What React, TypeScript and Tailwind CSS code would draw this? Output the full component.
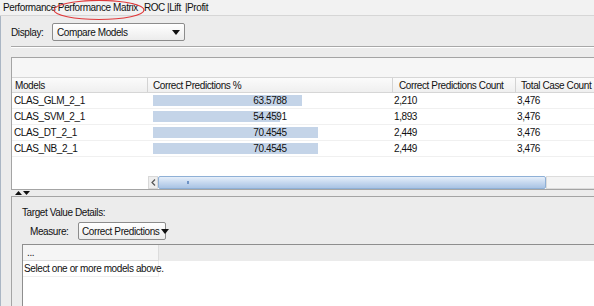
const rows = [
  { name: 'CLAS_GLM_2_1', pct: 63.5788, count: '2,210', total: '3,476' },
  { name: 'CLAS_SVM_2_1', pct: 54.4591, count: '1,893', total: '3,476' },
  { name: 'CLAS_DT_2_1', pct: 70.4545, count: '2,449', total: '3,476' },
  { name: 'CLAS_NB_2_1', pct: 70.4545, count: '2,449', total: '3,476' },
]

function Caret() {
  return (
    <svg width="8" height="5" viewBox="0 0 8 5" className="shrink-0">
      <path d="M0 0h8L4 5z" fill="#111" />
    </svg>
  )
}

export default function App() {
  return (
    <div className="relative w-[594px] h-[306px] overflow-hidden whitespace-nowrap bg-[#ececec] text-[10px] tracking-[-0.4px] text-[#111] font-['Liberation_Sans',Arial,sans-serif] flex flex-col">
      {/* tabs */}
      <div className="h-[16px] shrink-0 flex items-center pl-[3px] bg-[#f2f2f2] border-b border-[#d6d6d6]">
        <span className="mr-[2px]">Performance</span>
        <span className="mr-[6px]">Performance Matrix</span>
        <span className="mr-[2px]">ROC</span>
        <span className="mr-[4px]">|Lift</span>
        <span>|Profit</span>
      </div>
      <svg className="absolute left-[52px] top-0" width="94" height="22" viewBox="0 0 94 22">
        <ellipse cx="47" cy="10" rx="45" ry="9.5" fill="none" stroke="#e0393b" strokeWidth="1.2" />
      </svg>

      <div className="flex-1 flex bg-[#ececec]">
        <div className="w-[3px] bg-[#dde6ef] border-r border-[#aab6c4]" />
        <div className="flex-1 flex flex-col pl-[10px]">
          {/* display row */}
          <div className="flex items-center mt-[7px] h-[18px]">
            <span className="w-[41px]">Display:</span>
            <div className="w-[133px] h-[18px] flex items-center justify-between px-[4px] border border-[#8c8c8c] rounded-[2px] bg-gradient-to-b from-white to-[#ececec]">
              <span>Compare Models</span>
              <Caret />
            </div>
          </div>
          <div className="mt-[5px] h-[2px] border-t border-[#a8a8a8] border-b border-b-white" />

          {/* table panel */}
          <div className="mt-[9px] w-[600px] h-[133px] border border-[#a4a4a4] bg-white flex flex-col">
            <div className="h-[19px] bg-[#f6f6f6]" />
            <div className="h-[16px] flex items-center bg-gradient-to-b from-[#fbfbfb] to-[#efefef] border-y border-[#d6d6d6]">
              <div className="w-[136px] h-full flex items-center pl-[3px] border-r border-[#d3d3d3]">Models</div>
              <div className="w-[245px] h-full flex items-center pl-[5px] border-r border-[#d3d3d3]">Correct Predictions %</div>
              <div className="w-[123px] h-full flex items-center pl-[6px] border-r border-[#d3d3d3]">Correct Predictions Count</div>
              <div className="flex-1 h-full flex items-center pl-[5px]">Total Case Count</div>
            </div>
            {rows.map((r) => (
              <div key={r.name} className="h-[16px] flex items-center border-b border-[#f0f0f0]">
                <div className="w-[136px] pl-[2px]">{r.name}</div>
                <div className="w-[245px] h-full pl-[5px] flex items-center">
                  <div className="relative w-[234px] h-[11px]">
                    <div className="absolute left-0 top-0 h-full bg-[#c4d4e8]" style={{ width: `${(r.pct / 100) * 234}px` }} />
                    <div className="relative text-center leading-[11px]">{r.pct.toFixed(4)}</div>
                  </div>
                </div>
                <div className="w-[123px] pl-[1px]">{r.count}</div>
                <div className="flex-1 pl-[1px]">{r.total}</div>
              </div>
            ))}
            <div className="flex-1" />
            {/* horizontal scrollbar */}
            <div className="h-[13px] flex">
              <div className="w-[136px] bg-white" />
              <div className="w-[10px] flex items-center justify-center bg-[#eeeeee] border border-[#d8d8d8]">
                <svg width="5" height="7" viewBox="0 0 5 7">
                  <path d="M4 0.5L1 3.5L4 6.5" fill="none" stroke="#555" strokeWidth="1.2" />
                </svg>
              </div>
              <div className="w-[388px] relative rounded-[2px] border border-[#8fb0d6] bg-gradient-to-b from-[#e6effa] via-[#c6d8ef] to-[#a9c3e4]">
                <div className="absolute left-[28px] top-[4px] w-[2px] h-[3px] bg-[#6f93c6]" />
              </div>
              <div className="flex-1 bg-[#f4f4f4] border border-[#dcdcdc]" />
            </div>
          </div>

          {/* splitter */}
          <div className="h-[6px] flex items-start">
            <div className="flex gap-[1px] pl-[4px] pt-[1px]">
              <svg width="7" height="4" viewBox="0 0 7 4"><path d="M0 4h7L3.5 0z" fill="#111" /></svg>
              <svg width="7" height="4" viewBox="0 0 7 4"><path d="M0 0h7L3.5 4z" fill="#111" /></svg>
            </div>
          </div>

          {/* bottom panel */}
          <div className="flex-1 w-[600px] border-l border-t border-[#a4a4a4] flex flex-col pl-[10px]">
            <div className="mt-[9px] h-[12px] flex items-center">Target Value Details:</div>
            <div className="mt-[4px] flex items-center h-[18px] pl-[8px]">
              <span className="w-[48px]">Measure:</span>
              <div className="w-[88px] h-[18px] flex items-center justify-between gap-[2px] pl-[3px] pr-[2px] border border-[#8c8c8c] rounded-[2px] bg-gradient-to-b from-white to-[#ececec]">
                <span>Correct Predictions</span>
                <Caret />
              </div>
            </div>
            <div className="mt-[4px] flex-1 border-l border-t border-[#8e8e8e] bg-white flex flex-col">
              <div className="h-[16px] flex bg-[#ebebeb]">
                <div className="w-[136px] pl-[4px] flex items-center bg-[#f5f5f5] border-r border-b border-[#dcdcdc]">...</div>
              </div>
              <div className="h-[16px] w-[136px] pl-[1px] flex items-center border-r border-b border-[#eeeeee]">
                Select one or more models above.
              </div>
            </div>
          </div>
        </div>
      </div>
    </div>
  )
}
